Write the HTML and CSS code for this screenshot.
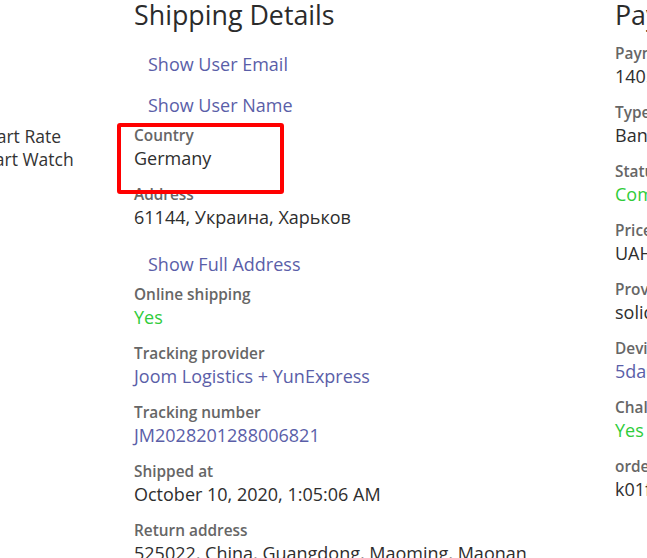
FILE: index.html
```html
<!DOCTYPE html>
<html lang="en">
<head>
<meta charset="utf-8">
<title>Order details</title>
<link rel="stylesheet" href="styles.css">
</head>
<body>
<div class="page">
  <div class="col col-left">
    <div class="product">
      <div class="line line-1">Heart Rate</div>
      <div class="line line-2">Smart Watch</div>
    </div>
  </div>

  <div class="col col-shipping">
    <h2 class="heading">Shipping Details</h2>
    <a class="link-btn" href="#">Show User Email</a>
    <a class="link-btn" href="#">Show User Name</a>
    <div class="field field-marked">
      <div class="label">Country</div>
      <div class="value">Germany</div>
      <span class="mark"></span>
    </div>
    <div class="field">
      <div class="label">Address</div>
      <div class="value">61144, Украина, Харьков</div>
    </div>
    <a class="link-btn" href="#">Show Full Address</a>
    <div class="field">
      <div class="label">Online shipping</div>
      <div class="value ok">Yes</div>
    </div>
    <div class="field">
      <div class="label">Tracking provider</div>
      <div class="value"><a class="link" href="#">Joom Logistics + YunExpress</a></div>
    </div>
    <div class="field">
      <div class="label">Tracking number</div>
      <div class="value"><a class="link" href="#">JM2028201288006821</a></div>
    </div>
    <div class="field">
      <div class="label">Shipped at</div>
      <div class="value">October 10, 2020, 1:05:06 AM</div>
    </div>
    <div class="field">
      <div class="label">Return address</div>
      <div class="value">525022, China, Guangdong, Maoming, Maonan</div>
    </div>
  </div>

  <div class="col col-payment">
    <h2 class="heading">Payment</h2>
    <div class="field">
      <div class="label">Payment id</div>
      <div class="value">140582</div>
    </div>
    <div class="field">
      <div class="label">Type</div>
      <div class="value">Bank card</div>
    </div>
    <div class="field">
      <div class="label">Status</div>
      <div class="value ok">Completed</div>
    </div>
    <div class="field">
      <div class="label">Price</div>
      <div class="value">UAH 1 400</div>
    </div>
    <div class="field">
      <div class="label">Provider</div>
      <div class="value">solidgate</div>
    </div>
    <div class="field">
      <div class="label">Device id</div>
      <div class="value"><a class="link" href="#">5da0c1e2f3</a></div>
    </div>
    <div class="field">
      <div class="label">Challenge passed</div>
      <div class="value ok">Yes</div>
    </div>
    <div class="field">
      <div class="label">order id</div>
      <div class="value">k01f2a9c</div>
    </div>
  </div>
</div>
</body>
</html>
```

FILE: styles.css
```css
html, body {
  margin: 0;
  padding: 0;
  background: #fff;
}
body {
  width: 647px;
  height: 558px;
  overflow: hidden;
  font-family: "Open Sans", "Noto Sans", sans-serif;
  color: #333;
}
.page {
  display: flex;
  align-items: flex-start;
  margin-left: -40px;
}
.col-left {
  width: 174px;
  flex: 0 0 174px;
  padding-top: 125px;
}
.product {
  font-size: 17.5px;
  line-height: 23px;
  color: #333;
  white-space: nowrap;
}
.line-1 { margin-left: 14px; }
.line-2 { margin-left: 9px; }

.col-shipping {
  flex: 0 0 481px;
  width: 481px;
}
.col-payment {
  flex: 0 0 300px;
}
.heading {
  margin: -2px 0 11px;
  font-size: 26.8px;
  line-height: 34px;
  font-weight: 400;
  color: #2b2b2b;
  white-space: nowrap;
}
.link-btn {
  display: block;
  width: max-content;
  padding: 8.5px 14px;
  font-size: 18px;
  line-height: 24px;
  color: #5a5ea8;
  text-decoration: none;
}
.field {
  margin-bottom: 14px;
  white-space: nowrap;
}
.field-marked {
  position: relative;
}
.label {
  font-size: 15.4px;
  line-height: 21px;
  font-weight: 600;
  color: #666;
}
.value {
  font-size: 18px;
  line-height: 24px;
  color: #2e2e2e;
}
.value.ok {
  color: #2fcc3a;
}
.link {
  color: #5a5ea8;
  text-decoration: none;
}
.mark {
  position: absolute;
  left: -17px;
  top: -2.5px;
  width: 159px;
  height: 63px;
  border: 4px solid #f00;
  border-radius: 3px;
}
```
